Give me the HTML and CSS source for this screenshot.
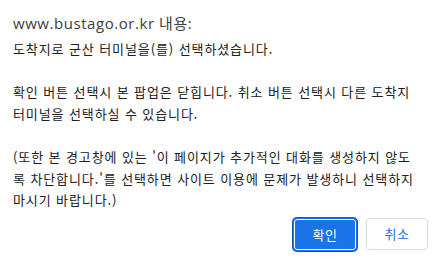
FILE: index.html
```html
<!DOCTYPE html>
<html lang="ko">
<head>
<meta charset="utf-8">
<title>bustago</title>
<link rel="stylesheet" href="styles.css">
</head>
<body>
<div class="dialog">
  <div class="title">www.bustago.or.kr 내용:</div>
  <div class="message">
    <p>도착지로 군산 터미널을(를) 선택하셨습니다.</p>
    <p>확인 버튼 선택시 본 팝업은 닫힙니다. 취소 버튼 선택시 다른 도착지<br>터미널을 선택하실 수 있습니다.</p>
    <p>(또한 본 경고창에 있는 '이 페이지가 추가적인 대화를 생성하지 않도<br>록 차단합니다.'를 선택하면 사이트 이용에 문제가 발생하니 선택하지<br>마시기 바랍니다.)</p>
  </div>
  <div class="buttons">
    <button class="btn btn-primary">확인</button>
    <button class="btn btn-secondary">취소</button>
  </div>
</div>
</body>
</html>
```
FILE: styles.css
```css
html, body {
  margin: 0;
  padding: 0;
  background: #ffffff;
}
.dialog {
  width: 445px;
  height: 261px;
  box-sizing: border-box;
  padding: 13px 17px 0 13px;
  font-family: "Noto Sans CJK KR", "Noto Sans", sans-serif;
  color: #202124;
}
.title {
  font-family: "Open Sans", "Noto Sans CJK KR", sans-serif;
  font-size: 15px;
  line-height: 20px;
  letter-spacing: 0.55px;
  color: #3c4043;
}
.message {
  margin-top: 5px;
  font-size: 13px;
  line-height: 21.6px;
  letter-spacing: 0.9px;
  white-space: nowrap;
}
.message p {
  margin: 0 0 21.6px 0;
}
.message p:last-child {
  margin-bottom: 0;
}
.buttons {
  display: flex;
  justify-content: flex-end;
  align-items: flex-start;
  gap: 9px;
  margin-top: 7px;
}
.btn {
  font-family: "Noto Sans CJK KR", sans-serif;
  font-size: 13px;
  height: 33px;
  border-radius: 4px;
  padding: 0;
  letter-spacing: 0.5px;
  cursor: pointer;
}
.btn-primary {
  width: 64px;
  background: #1a73e8;
  color: #ffffff;
  border: 1px solid #1a73e8;
  box-shadow: inset 0 0 0 1px #ffffff, 0 0 0 1px #1558b0;
}
.btn-secondary {
  width: 62px;
  height: 32px;
  background: #ffffff;
  color: #1a73e8;
  border: 1px solid #dadce0;
}
```
